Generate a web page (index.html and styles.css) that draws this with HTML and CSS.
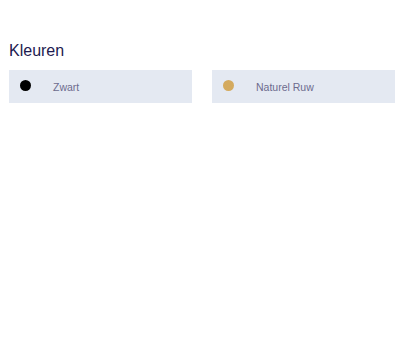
FILE: index.html
```html
<!DOCTYPE html>
<html lang="nl">
<head>
<meta charset="utf-8">
<title>Kleuren</title>
<link rel="stylesheet" href="styles.css">
</head>
<body>
<section class="colors">
  <h2 class="colors-title">Kleuren</h2>
  <div class="colors-grid">
    <div class="color-card">
      <span class="swatch swatch-black"></span>
      <span class="color-name">Zwart</span>
    </div>
    <div class="color-card">
      <span class="swatch swatch-natural"></span>
      <span class="color-name">Naturel Ruw</span>
    </div>
  </div>
</section>
</body>
</html>
```
FILE: styles.css
```css
html, body {
  margin: 0;
  padding: 0;
  background: #ffffff;
}
body {
  font-family: "Liberation Sans", Arial, sans-serif;
}
.colors {
  padding: 42px 0 0 9px;
}
.colors-title {
  margin: 0 0 10px 0;
  font-size: 16px;
  line-height: 18px;
  font-weight: normal;
  color: #1d1a4f;
}
.colors-grid {
  display: grid;
  grid-template-columns: 183px 183px;
  column-gap: 20px;
}
.color-card {
  display: flex;
  align-items: center;
  height: 33px;
  padding-left: 11px;
  background: #e4e9f2;
}
.swatch {
  flex: 0 0 auto;
  width: 11px;
  height: 11px;
  border-radius: 50%;
  margin-right: 22px;
  margin-top: -2px;
}
.swatch-black {
  background: #000000;
}
.swatch-natural {
  background: #d4aa5e;
}
.color-name {
  font-size: 10.5px;
  color: #6c6b8e;
  margin-top: 1px;
}
```
